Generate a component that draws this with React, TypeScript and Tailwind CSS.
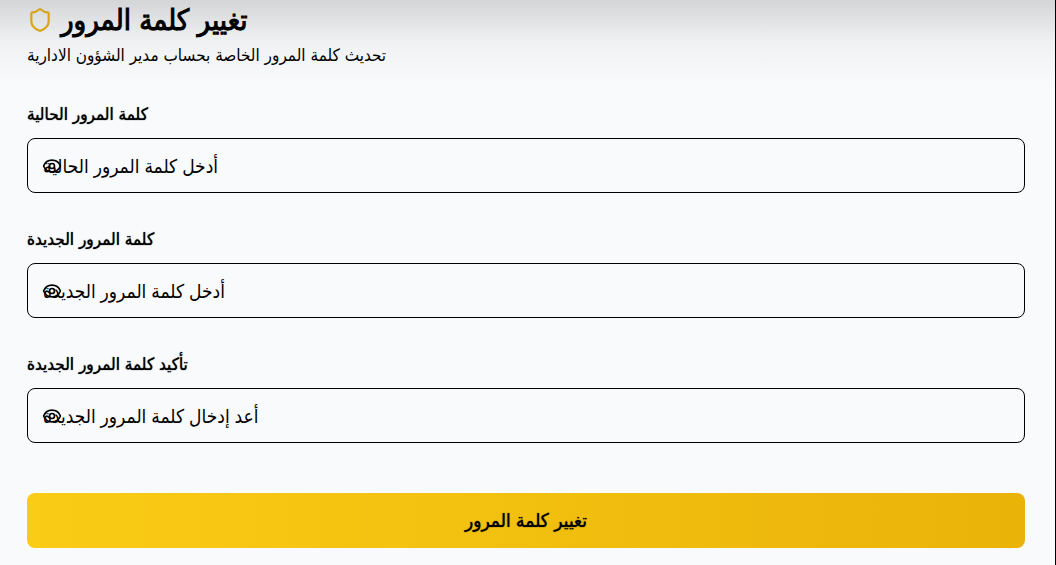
import { Eye, Shield } from "lucide-react";

type FieldProps = { id: string; label: string; placeholder: string };

function PasswordField({ id, label, placeholder }: FieldProps) {
  return (
    <div>
      <label htmlFor={id} className="block text-[17px] leading-6 font-normal [text-shadow:0_0_1px_black]">
        {label}
      </label>
      <div className="relative mt-3">
        <input
          id={id}
          type="password"
          placeholder={placeholder}
          className="block h-[55px] w-full rounded-lg border border-black bg-transparent px-[15px] text-left font-['Noto_Sans','DejaVu_Sans_Condensed',sans-serif] text-[19px] text-black placeholder:overflow-visible placeholder:text-black"
        />
        <button type="button" aria-label="إظهار كلمة المرور" className="absolute inset-y-0 left-[15px] flex items-center">
          <Eye size={20} />
        </button>
      </div>
    </div>
  );
}

export default function App() {
  return (
    <main
      dir="rtl"
      className="min-h-screen border-r border-black bg-[#f9fafc] bg-linear-to-b from-[#d4d5d7] via-[#f0f1f2] via-[42px] to-[#f9fafc] to-[84px] pr-[30px] pb-4 pl-[27px] text-left font-['DejaVu_Sans_Condensed','DejaVu_Sans',sans-serif] text-black"
    >
      <header>
        <h1 className="flex items-center justify-end gap-2 pt-1 text-[29px] leading-8 font-normal">
          <span className="[-webkit-text-stroke:1px_black]">تغيير كلمة المرور</span>
          <Shield size={26} className="text-[#d9a514]" />
        </h1>
        <p className="mt-[7px] text-[17px] leading-6">تحديث كلمة المرور الخاصة بحساب مدير الشؤون الادارية</p>
      </header>
      <form className="mt-[35px]">
        <div className="flex flex-col gap-[34px]">
          <PasswordField id="current" label="كلمة المرور الحالية" placeholder="أدخل كلمة المرور الحالية" />
          <PasswordField id="new" label="كلمة المرور الجديدة" placeholder="أدخل كلمة المرور الجديدة" />
          <PasswordField id="confirm" label="تأكيد كلمة المرور الجديدة" placeholder="أعد إدخال كلمة المرور الجديدة" />
        </div>
        <button type="button" className="mt-[50px] h-[55px] w-full rounded-lg bg-linear-to-r from-[#facc15] to-[#eab308] text-[19px] font-normal [text-shadow:0_0_1px_black]">
          تغيير كلمة المرور
        </button>
      </form>
    </main>
  );
}
